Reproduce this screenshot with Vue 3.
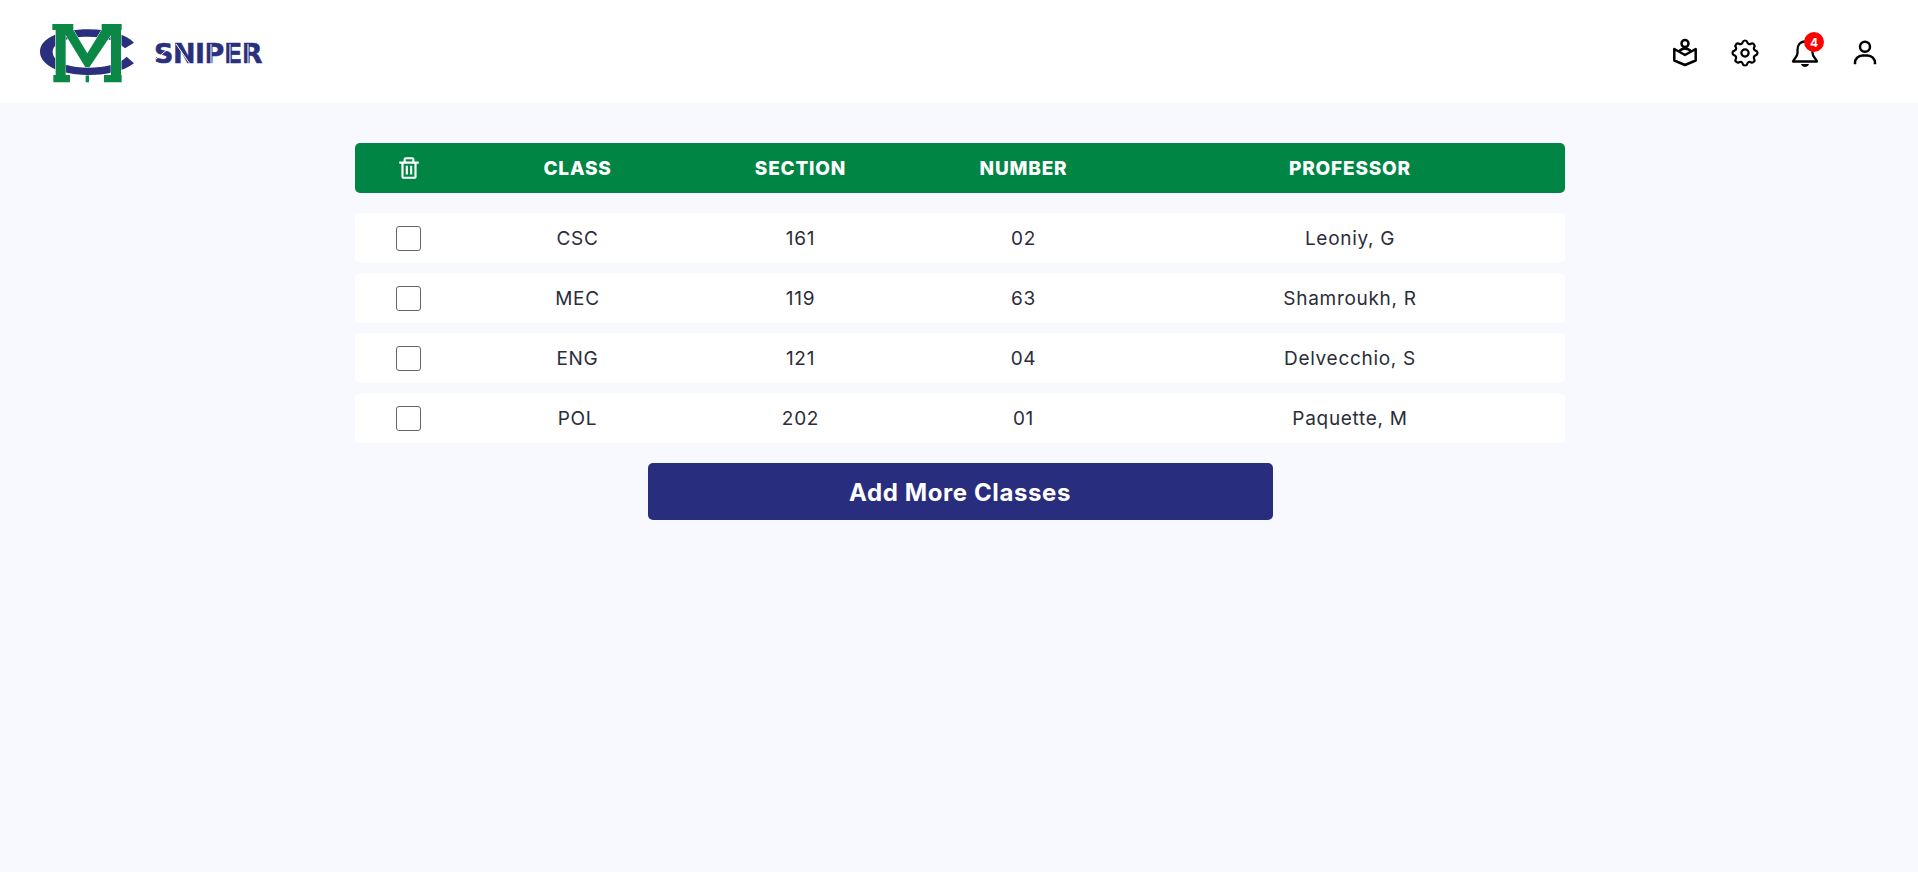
<script setup>
const rows = [
  { id: 1, cls: 'CSC', section: '161', number: '02', professor: 'Leoniy, G' },
  { id: 2, cls: 'MEC', section: '119', number: '63', professor: 'Shamroukh, R' },
  { id: 3, cls: 'ENG', section: '121', number: '04', professor: 'Delvecchio, S' },
  { id: 4, cls: 'POL', section: '202', number: '01', professor: 'Paquette, M' },
]
const ring = 'M297 68C275 45 225 28 160 28C75 28 15 55 15 95C15 135 75 165 160 165C215 165 270 152 297 130L275 110C255 130 215 143 160 143C95 143 53 125 53 95C53 70 95 50 160 50C210 50 250 65 270 85Z'
</script>

<template>
  <div class="page">
    <header class="topbar">
      <div class="brand">
        <svg class="logo" viewBox="0 0 315 198">
          <defs>
            <clipPath id="logo-band"><rect x="94" y="120" width="132" height="52" /></clipPath>
          </defs>
          <path class="navy" :d="ring" />
          <path class="green" d="M52 12H115V30L157 100L200 30V12H260V30H258V165H260V187H207V165H228V45L162 143V187H152V143L92 45V165H105V187H55V165H62V30H52Z" />
          <g clip-path="url(#logo-band)"><path class="navy over" :d="ring" /></g>
        </svg>
        <span class="brand-name">SNIPER
          <svg class="cuts" viewBox="0 0 108 20" aria-hidden="true">
            <path d="M2 15L15 4M22 0L36 20M57 0V20M76 0V20M94 0V20" />
          </svg>
        </span>
      </div>
      <nav class="actions">
        <svg class="icon book" viewBox="0 0 30 30">
          <circle cx="15" cy="5.6" r="3.5" />
          <path d="M4.300 11L15 17L25.700 11V22.500L15 27L4.300 22.500ZM9 13.500C10.500 11.500 12.500 10.500 15 10.500S19.500 11.500 21 13.500" />
        </svg>
        <svg class="icon gear" viewBox="1.200 1.200 21.600 21.600">
          <path d="M10.325 4.317c.426-1.756 2.924-1.756 3.350 0a1.724 1.724 0 0 0 2.573 1.066c1.543-.940 3.310.826 2.370 2.370a1.724 1.724 0 0 0 1.065 2.572c1.756.426 1.756 2.924 0 3.350a1.724 1.724 0 0 0-1.066 2.573c.940 1.543-.826 3.310-2.370 2.370a1.724 1.724 0 0 0-2.572 1.065c-.426 1.756-2.924 1.756-3.350 0a1.724 1.724 0 0 0-2.573-1.066c-1.543.940-3.310-.826-2.370-2.370a1.724 1.724 0 0 0-1.065-2.572c-1.756-.426-1.756-2.924 0-3.350a1.724 1.724 0 0 0 1.066-2.573c-.940-1.543.826-3.310 2.370-2.370c1 .608 2.296.070 2.572-1.065z" />
          <circle cx="12" cy="12" r="2.600" />
        </svg>
        <div class="bell">
          <svg class="icon" viewBox="0 0 30 30">
            <path d="M15 3.500C10 3.500 7.500 7.500 7.500 12V15C7.500 18.500 4.500 20 3 23.500H27C25.500 20 22.500 18.500 22.500 15V12C22.500 7.500 20 3.500 15 3.500Z" />
            <path class="solid" d="M11 26H19C18.500 28 16.500 29 15 29S11.500 28 11 26Z" />
          </svg>
          <span class="badge">4</span>
        </div>
        <svg class="icon filled" viewBox="0 0 24 24">
          <path d="M12 2a5 5 0 1 0 5 5 5 5 0 0 0-5-5zm0 8a3 3 0 1 1 3-3 3 3 0 0 1-3 3zm9 11v-1a7 7 0 0 0-7-7h-4a7 7 0 0 0-7 7v1h2v-1a5 5 0 0 1 5-5h4a5 5 0 0 1 5 5v1z" />
        </svg>
      </nav>
    </header>

    <main class="content">
      <div class="table">
        <div class="row head">
          <div class="cell first">
            <svg class="trash" viewBox="0 0 24 24">
              <path d="M5 20a2 2 0 0 0 2 2h10a2 2 0 0 0 2-2V8h2V6h-4V4a2 2 0 0 0-2-2H9a2 2 0 0 0-2 2v2H3v2h2zM9 4h6v2H9zM8 8h9v12H7V8z" />
              <path d="M9 10h2v8H9zm4 0h2v8h-2z" />
            </svg>
          </div>
          <div class="cell">CLASS</div>
          <div class="cell">SECTION</div>
          <div class="cell">NUMBER</div>
          <div class="cell">PROFESSOR</div>
        </div>
        <div v-for="row in rows" :key="row.id" class="row body">
          <div class="cell first"><span class="check"></span></div>
          <div class="cell">{{ row.cls }}</div>
          <div class="cell">{{ row.section }}</div>
          <div class="cell">{{ row.number }}</div>
          <div class="cell">{{ row.professor }}</div>
        </div>
      </div>
      <button class="add">Add More Classes</button>
    </main>
  </div>
</template>

<style>
html, body { margin: 0; background: #f8f9fe; }
</style>

<style scoped>
.page {
  min-height: 872px;
  background: #f8f9fe;
  font-family: Inter, "Noto Sans", sans-serif;
  color: #2b2d38;
}
.topbar {
  height: 103px;
  background: #fff;
  display: flex;
  align-items: center;
  justify-content: space-between;
  padding: 3px 38px 0 35px;
  box-sizing: border-box;
}
.brand { display: flex; align-items: center; gap: 14px; }
.logo { display: block; width: 105px; height: 66px; }
.navy { fill: #2a307d; }
.over { stroke: #fff; stroke-width: 3; paint-order: stroke; }
.green { fill: #0b8746; stroke: #fff; stroke-width: 3; paint-order: stroke; }
.brand-name {
  position: relative;
  padding-top: 2px;
  font-family: "DejaVu Sans", sans-serif;
  font-weight: 700;
  font-size: 27px;
  line-height: 20px;
  letter-spacing: -0.5px;
  color: #2a307d;
  -webkit-text-stroke: 0.5px #2a307d;
}
.cuts {
  position: absolute;
  left: 0;
  top: 2px;
  width: 108px;
  height: 20px;
  fill: none;
  stroke: #fff;
  stroke-width: 1;
}
.actions { display: flex; align-items: center; gap: 30px; }
.icon {
  display: block;
  width: 30px;
  height: 30px;
  fill: none;
  stroke: #000;
  stroke-width: 2.3;
  stroke-linecap: round;
  stroke-linejoin: round;
}
.book { stroke-width: 2.5; }
.gear { stroke-width: 1.6; }
.filled { fill: #000; stroke: none; }
.solid { fill: #000; stroke: none; }
.bell { position: relative; }
.badge {
  position: absolute;
  top: -6px;
  right: -4px;
  width: 20px;
  height: 20px;
  border-radius: 50%;
  background: #f00;
  color: #fff;
  font-size: 12px;
  font-weight: 700;
  display: flex;
  align-items: center;
  justify-content: center;
}
.content {
  display: flex;
  flex-direction: column;
  align-items: center;
  padding: 40px 0 0 2px;
}
.table {
  width: 1210px;
  display: flex;
  flex-direction: column;
  gap: 10px;
}
.row {
  height: 50px;
  border-radius: 5px;
  display: grid;
  grid-template-columns: 111px 223px 223px 223px 430px;
  align-items: center;
  text-align: center;
}
.head {
  background: #008545;
  color: #fff;
  font-weight: 800;
  font-size: 19px;
  letter-spacing: 0.8px;
  margin-bottom: 10px;
}
.body {
  background: #fff;
  font-size: 19px;
  letter-spacing: 0.7px;
}
.cell { display: flex; justify-content: center; align-items: center; }
.first { padding-right: 4px; }
.trash {
  width: 26px;
  height: 26px;
  fill: #fff;
}
.check {
  width: 23px;
  height: 23px;
  border: 1px solid #666;
  border-radius: 3px;
  background: #fff;
}
.add {
  width: 625px;
  height: 57px;
  margin-top: 20px;
  padding: 2px 0 0;
  background: #282d7d;
  color: #fff;
  border: none;
  border-radius: 5px;
  font-family: inherit;
  font-size: 24px;
  font-weight: 700;
  letter-spacing: 0.6px;
}
</style>
